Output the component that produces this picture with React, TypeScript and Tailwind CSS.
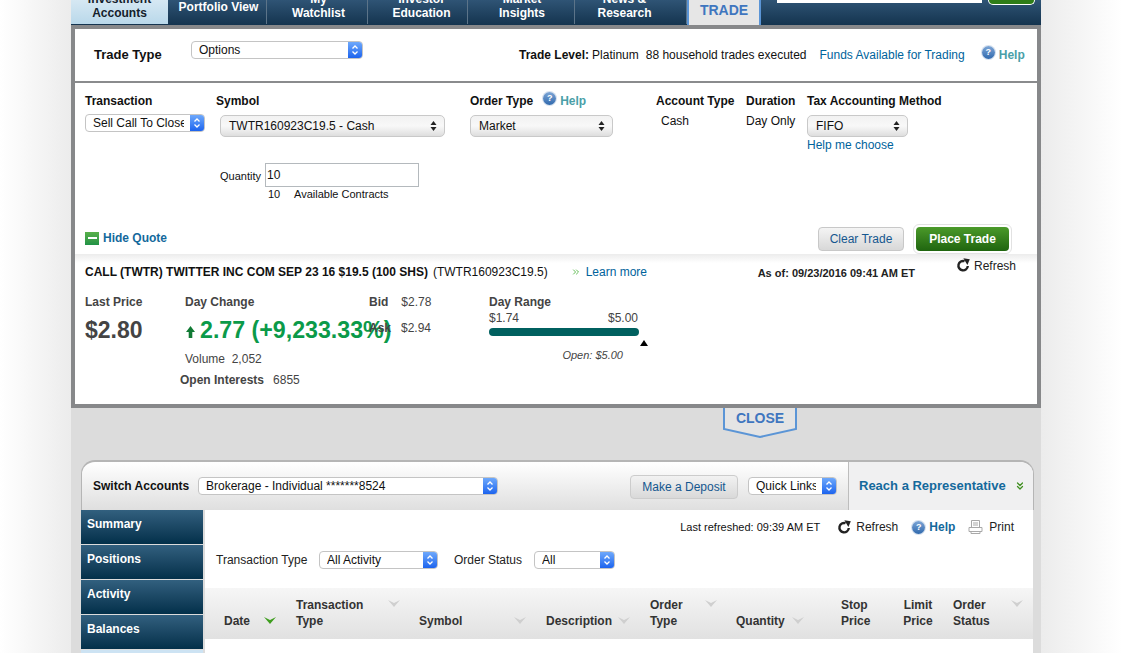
import { ChevronsDown, ChevronsRight } from "lucide-react";

const FONT = "font-['Liberation_Sans',Arial,sans-serif]";

function AquaSelect({ value, className }: { value: string; className: string }) {
  return (
    <div className={`flex h-[18px] items-stretch overflow-hidden rounded-[4px] border border-[#c4c4c4] bg-white text-[12px] leading-[16px] text-[#111] ${className}`}>
      <span className="min-w-0 flex-1 overflow-hidden whitespace-nowrap pl-[7px] pr-[6px]">
        <span className="block overflow-hidden">{value}</span>
      </span>
      <span className="flex w-[14px] shrink-0 items-center justify-center bg-gradient-to-b from-[#6ea8fb] to-[#1c63ee]">
        <svg width="8" height="12" viewBox="0 0 8 12" fill="none" stroke="#fff" strokeWidth="1.3">
          <path d="M1.5 4.5 4 2l2.5 2.5M1.5 7.5 4 10l2.5-2.5" />
        </svg>
      </span>
    </div>
  );
}

function GraySelect({ value, className }: { value: string; className: string }) {
  return (
    <div className={`flex h-[22px] items-center justify-between rounded-[5px] border border-[#c9c9c9] bg-gradient-to-b from-[#f2f2f2] via-[#f8f8f8] to-[#dedede] pl-[8px] pr-[7px] text-[12px] text-[#111] ${className}`}>
      <span>{value}</span>
      <svg width="7" height="12" viewBox="0 0 7 12" fill="#222">
        <path d="M3.5 1 6.5 5h-6zM3.5 11 .5 7h6z" />
      </svg>
    </div>
  );
}

function HelpDot() {
  return (
    <span className="flex h-[13px] w-[13px] items-center justify-center rounded-full bg-gradient-to-b from-[#7ea6d6] to-[#2f69ad] text-[9px] font-bold leading-none text-white ring-1 ring-[#d5e0ee]">
      ?
    </span>
  );
}

function RefreshIcon({ className }: { className: string }) {
  return (
    <svg width="14" height="14" viewBox="0 0 14 14" className={className} fill="none">
      <path d="M8.6 3.2A4.7 4.7 0 1 0 11.8 8" stroke="#222" strokeWidth="2.4" />
      <path d="M7.4 0.2 13.8 1.2 11.4 7z" fill="#222" />
    </svg>
  );
}

function SortArrow({ className, green }: { className: string; green?: boolean }) {
  return (
    <svg width="12" height="7" viewBox="0 0 12 7" className={className} fill={green ? "#3f9e1f" : "#cfcfcf"}>
      <path d="M0 0 6 7l6-7-6 3z" />
    </svg>
  );
}

const navTabs = [
  { label: ["My", "Watchlist"], box: "w-[101px] pl-[3px]" },
  { label: ["Investor", "Education"], box: "w-[100px] pl-[8px]" },
  { label: ["Market", "Insights"], box: "w-[107px] pl-[2px]" },
  { label: ["News &", "Research"], box: "w-[112px] pr-[12px]" },
];

function TopNav() {
  return (
    <div className="flex h-[25px] shrink-0 overflow-hidden bg-gradient-to-b from-[#2f5475] to-[#14344f] text-[12px] font-bold leading-[14px] text-white">
      <div className="flex h-[24px] w-[97px] flex-col items-center justify-end bg-gradient-to-b from-[#d6e8f3] to-[#b9d8ea] pb-[4px] text-[#14212c]">
        <span>Investment</span>
        <span>Accounts</span>
      </div>
      <div className="flex h-[24px] w-[99px] items-start justify-center border-r border-[#5c7489] pl-[3px]">Portfolio View</div>
      {navTabs.map((tab) => (
        <div key={tab.label[1]} className={`flex h-[24px] flex-col items-center justify-end border-r border-[#5c7489] pb-[4px] ${tab.box}`}>
          <span>{tab.label[0]}</span>
          <span>{tab.label[1]}</span>
        </div>
      ))}
      <div className="flex h-[25px] w-[74px] items-start justify-center border-x-2 border-[#5b95d6] bg-[#e6e6e6] pt-[3px] text-[14px] text-[#3f76bf]">
        TRADE
      </div>
      <div className="ml-[16px] h-[3px] w-[205px] bg-white" />
      <div className="ml-[6px] h-[5px] w-[47px] rounded-b-[5px] border-x border-b border-white bg-[#2f7d18]" />
    </div>
  );
}

function TradeTypeRow() {
  return (
    <div className="flex h-[54px] shrink-0 border-b-2 border-[#8a8b8d] bg-white text-[12px] text-[#111]">
      <span className="ml-[19px] mt-[18px] w-[97px] text-[13px] font-bold leading-[16px]">Trade Type</span>
      <AquaSelect value="Options" className="mt-[12px] w-[172px]" />
      <div className="ml-[156px] mt-[18px] flex h-[16px] items-center whitespace-nowrap leading-[16px]">
        <b>Trade Level:</b>
        <span className="ml-[3px]">Platinum</span>
        <span className="ml-[7px]">88 household trades executed</span>
        <span className="ml-[13px] text-[#00639c]">Funds Available for Trading</span>
        <span className="mb-[6px] ml-[17px]"><HelpDot /></span>
        <b className="ml-[4px] text-[#4a9fa8]">Help</b>
      </div>
    </div>
  );
}

function OrderForm() {
  return (
    <div className="flex h-[171px] shrink-0 flex-col bg-white pl-[10px] text-[12px] leading-[14px] text-[#111]">
      <div className="flex pt-[11px]">
        <div className="w-[131px]">
          <b>Transaction</b>
          <AquaSelect value="Sell Call To Close" className="mt-[6px] w-[120px]" />
        </div>
        <div className="w-[254px]">
          <b>Symbol</b>
          <GraySelect value="TWTR160923C19.5 - Cash" className="ml-[4px] mt-[7px] w-[225px]" />
          <div className="ml-[4px] mt-[26px] flex items-center text-[11px]">
            <span className="mt-[1px] w-[45px]">Quantity</span>
            <div className="flex h-[24px] w-[154px] items-center border border-[#b4b9bd] pl-[1px] text-[12px]">10</div>
          </div>
          <div className="ml-[52px] flex text-[11px]">
            <span className="w-[26px]">10</span>
            <span>Available Contracts</span>
          </div>
        </div>
        <div className="w-[186px]">
          <div className="flex h-[14px] items-center">
            <b>Order Type</b>
            <span className="mb-[6px] ml-[10px]"><HelpDot /></span>
            <b className="ml-[4px] text-[#4a9fa8]">Help</b>
          </div>
          <GraySelect value="Market" className="mt-[7px] w-[143px]" />
        </div>
        <div className="w-[90px]">
          <b>Account Type</b>
          <div className="ml-[5px] mt-[6px]">Cash</div>
        </div>
        <div className="w-[61px]">
          <b>Duration</b>
          <div className="mt-[6px]">Day Only</div>
        </div>
        <div>
          <b>Tax Accounting Method</b>
          <GraySelect value="FIFO" className="mt-[7px] w-[101px]" />
          <div className="mt-[1px] text-[#00639c]">Help me choose</div>
        </div>
      </div>
      <div className="mt-auto flex items-center pr-[25px]">
        <span className="mb-[2px] flex h-[13px] w-[14px] items-center justify-center bg-gradient-to-b from-[#58b04a] to-[#1f9246]">
          <span className="h-[2px] w-[9px] bg-white" />
        </span>
        <b className="mb-[2px] ml-[4px] text-[#14699c]">Hide Quote</b>
        <div className="ml-auto flex h-[24px] w-[86px] items-center justify-center rounded-[4px] border border-[#c8c8c8] bg-gradient-to-b from-[#f4f4f4] to-[#d8d8d8] text-[#15578f]">
          Clear Trade
        </div>
        <div className="ml-[9px] rounded-[6px] border border-[#e2e2e2] bg-white p-[2px]">
          <div className="flex h-[24px] w-[93px] items-center justify-center rounded-[4px] bg-gradient-to-b from-[#4b9a2a] to-[#1f650f] font-bold text-white">
            Place Trade
          </div>
        </div>
      </div>
    </div>
  );
}

function QuotePanel() {
  return (
    <div className="flex-1 bg-gradient-to-b from-[#ececec] to-white to-[9px] pl-[10px] text-[12px] leading-[14px] text-[#111]">
      <div className="flex items-start whitespace-nowrap">
        <div className="mt-[10px] flex w-[830px] shrink-0 items-center">
          <b>CALL (TWTR) TWITTER INC COM SEP 23 16 $19.5 (100 SHS)</b>
          <span className="ml-[5px]">(TWTR160923C19.5)</span>
          <ChevronsRight size={10} strokeWidth={2} className="ml-[23px] text-[#45b035]" />
          <span className="ml-[5px] text-[#00639c]">Learn more</span>
          <b className="ml-auto mt-[2px] text-[11px] text-[#222]">As of: 09/23/2016 09:41 AM ET</b>
        </div>
        <RefreshIcon className="ml-[41px] mt-[4px] shrink-0" />
        <span className="ml-[4px] mt-[5px] text-[#222]">Refresh</span>
      </div>
      <div className="mt-[15px] flex text-[#444]">
        <div className="w-[100px]">
          <b>Last Price</b>
          <div className="mt-[7px] text-[23px] font-bold leading-[28px]">$2.80</div>
        </div>
        <div className="w-[184px]">
          <b>Day Change</b>
          <div className="mt-[7px] flex items-center whitespace-nowrap text-[23.2px] font-bold leading-[28px] text-[#0b9a49]">
            <svg width="9" height="12" viewBox="0 0 9 12" fill="#117a34" className="ml-[1px] mr-[5px] mt-[4px] shrink-0">
              <path d="M4.5 0 9 6H6.3v6H2.7V6H0z" />
            </svg>
            2.77 (+9,233.33%)
          </div>
          <div className="mt-[8px]">Volume&nbsp; 2,052</div>
          <div className="-ml-[5px] mt-[7px] whitespace-nowrap">
            <b>Open Interests</b>
            <span className="ml-[9px]">6855</span>
          </div>
        </div>
        <div className="w-[120px]">
          <div><b>Bid</b><span className="ml-[13px]">$2.78</span></div>
          <div className="mt-[12px]"><b>Ask</b><span className="ml-[10px]">$2.94</span></div>
        </div>
        <div className="w-[150px]">
          <b>Day Range</b>
          <div className="mt-[2px] flex justify-between">
            <span>$1.74</span>
            <span className="mr-[1px]">$5.00</span>
          </div>
          <div className="relative mt-[3px] h-[8px] rounded-full bg-[#00605f]">
            <svg width="8" height="6" viewBox="0 0 8 6" fill="#000" className="absolute -right-[9px] top-[12px]">
              <path d="M4 0l4 6H0z" />
            </svg>
          </div>
          <div className="mr-[16px] mt-[12px] text-right text-[11px] italic">Open: $5.00</div>
        </div>
      </div>
    </div>
  );
}

function CloseTab() {
  return (
    <div className="relative ml-[652px] h-[30px] w-[74px] shrink-0 text-center text-[14px] font-bold leading-[20px] text-[#3f76bf]">
      <svg width="74" height="30" viewBox="0 0 74 30" fill="#e4e4e4" stroke="#5b95d6" strokeWidth="2" className="absolute left-0 top-0">
        <path d="M1 0v21l36 8 36-8V0" />
      </svg>
      <span className="relative">CLOSE</span>
    </div>
  );
}

function AccountBar() {
  return (
    <div className="flex h-[50px] shrink-0 overflow-hidden rounded-t-[14px] border-x border-t-2 border-[#b5b5b5] border-b-0 bg-gradient-to-b from-white to-[#dfdfdf] text-[12px] leading-[14px] text-[#111]">
      <b className="ml-[11px] mt-[17px] w-[105px] whitespace-nowrap">Switch Accounts</b>
      <AquaSelect value="Brokerage - Individual *******8524" className="mt-[15px] w-[300px]" />
      <div className="ml-[132px] mt-[13px] flex h-[24px] w-[108px] items-center justify-center rounded-[4px] border border-[#cccccc] bg-gradient-to-b from-[#f2f2f2] to-[#d9d9d9] text-[#15578f]">
        Make a Deposit
      </div>
      <AquaSelect value="Quick Links" className="ml-[10px] mt-[15px] w-[89px]" />
      <div className="ml-[11px] flex flex-1 items-start border-l border-[#bdbdbd] bg-[#f0f0f1] pl-[10px] pt-[17px]">
        <b className="whitespace-nowrap text-[13px] text-[#14699c]">Reach a Representative</b>
        <ChevronsDown size={12} strokeWidth={2.5} className="ml-[8px] mt-[1px] text-[#3f8f1f]" />
      </div>
    </div>
  );
}

const sideItems = ["Summary", "Positions", "Activity", "Balances"];

function SideNav() {
  return (
    <div className="w-[122px] shrink-0 text-[12px] font-bold leading-[14px] text-white">
      {sideItems.map((item) => (
        <div key={item} className="mb-[1px] h-[34px] bg-gradient-to-b from-[#32607f] to-[#03304a] pl-[6px] pt-[7px]">
          {item}
        </div>
      ))}
      <div className="h-[10px] bg-[#cde3f3]" />
    </div>
  );
}

function ActivityTable() {
  return (
    <div className="grid h-[51px] grid-cols-[91px_123px_127px_104px_86px_105px_63px_49px_1fr] bg-gradient-to-b from-[#f6f6f6] to-[#e1e1e1] text-[12px] font-bold leading-[16px] text-[#333]">
      <div className="flex items-start pl-[19px] pt-[25px]">Date<SortArrow green className="ml-[14px] mt-[4px]" /></div>
      <div className="flex items-start pt-[9px]">
        <span className="w-[92px]">Transaction<br />Type</span>
        <SortArrow className="mt-[3px]" />
      </div>
      <div className="flex items-start pt-[25px]"><span className="w-[95px]">Symbol</span><SortArrow className="mt-[4px]" /></div>
      <div className="flex items-start pt-[25px]"><span className="w-[72px]">Description</span><SortArrow className="mt-[4px]" /></div>
      <div className="flex items-start pt-[9px]">
        <span className="w-[55px]">Order<br />Type</span>
        <SortArrow className="mt-[3px]" />
      </div>
      <div className="flex items-start pt-[25px]"><span className="w-[56px]">Quantity</span><SortArrow className="mt-[4px]" /></div>
      <div className="w-[26px] pt-[9px] text-center">Stop<br />Price</div>
      <div className="-ml-[1px] w-[30px] pt-[9px] text-center">Limit<br />Price</div>
      <div className="flex items-start pt-[9px]">
        <span className="w-[58px]">Order<br />Status</span>
        <SortArrow className="mt-[3px]" />
      </div>
    </div>
  );
}

function ActivityPanel() {
  return (
    <div className="mr-[1px] flex-1 bg-white text-[12px] leading-[14px] text-[#222]">
      <div className="flex items-center justify-end pr-[19px] pt-[10px]">
        <span className="text-[11px] text-[#111]">Last refreshed: 09:39 AM ET</span>
        <RefreshIcon className="ml-[17px]" />
        <span className="ml-[5px]">Refresh</span>
        <span className="ml-[14px]"><HelpDot /></span>
        <b className="ml-[4px] text-[#14699c]">Help</b>
        <svg width="15" height="14" viewBox="0 0 15 14" fill="#fff" stroke="#a9a9a9" className="ml-[13px]">
          <path d="M3.5.5h8v7h-8zM1 7.5h13v4H1zM3 11.5h9v2H3zM5 3h5M5 5h5" />
        </svg>
        <span className="ml-[6px]">Print</span>
      </div>
      <div className="flex items-center pl-[11px] pt-[17px]">
        <span className="w-[103px]">Transaction Type</span>
        <AquaSelect value="All Activity" className="w-[119px]" />
        <span className="ml-[16px] w-[80px]">Order Status</span>
        <AquaSelect value="All" className="w-[81px]" />
      </div>
      <div className="mt-[19px]">
        <ActivityTable />
      </div>
    </div>
  );
}

export default function App() {
  return (
    <div className={`flex h-[653px] w-[1122px] overflow-hidden ${FONT}`}>
      <div className="w-[71px] shrink-0 bg-gradient-to-r from-white to-[#ececec]" />
      <div className="flex w-[970px] shrink-0 flex-col bg-[#dcdcdc]">
        <TopNav />
        <div className="flex h-[383px] shrink-0 flex-col border-x-4 border-b-4 border-t-4 border-[#87888a]">
          <TradeTypeRow />
          <OrderForm />
          <QuotePanel />
        </div>
        <CloseTab />
        <div className="ml-[10px] mt-[22px] flex w-[953px] flex-1 flex-col">
          <AccountBar />
          <div className="flex flex-1">
            <SideNav />
            <div className="w-[2px] bg-[#dcdcdc]" />
            <ActivityPanel />
          </div>
        </div>
      </div>
      <div className="flex-1 bg-gradient-to-r from-[#ececec] to-white" />
    </div>
  );
}
